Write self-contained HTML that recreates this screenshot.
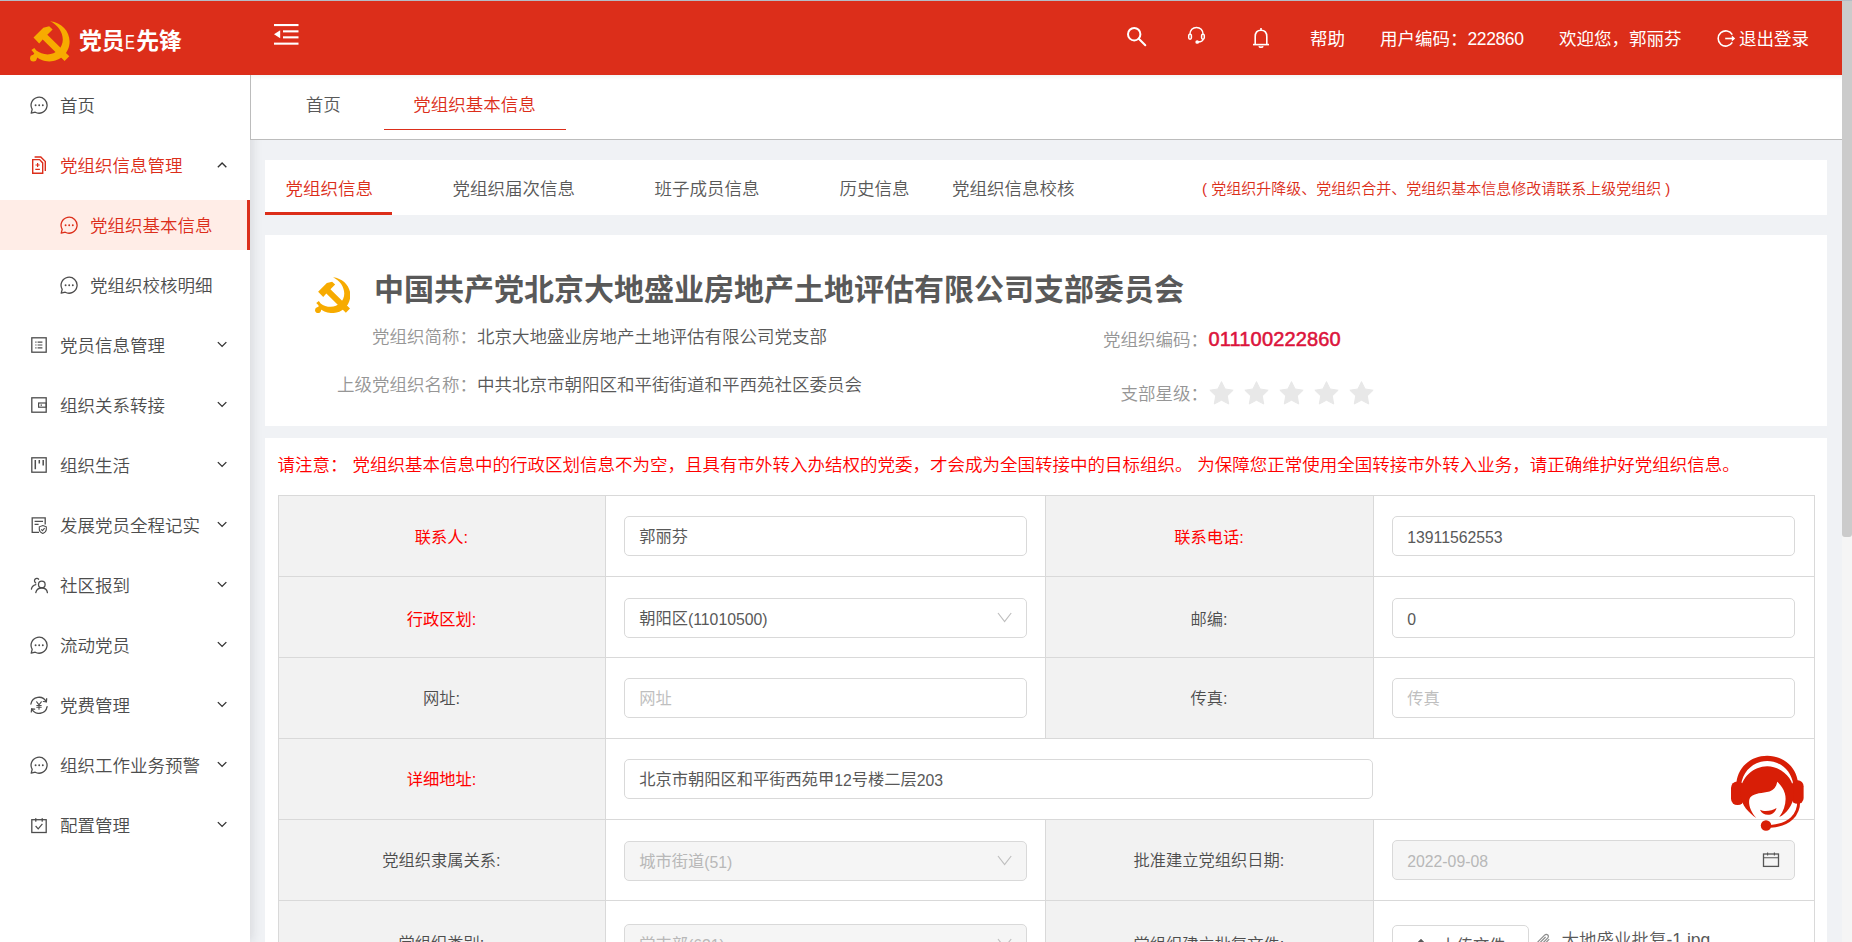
<!DOCTYPE html>
<html lang="zh-CN">
<head>
<meta charset="utf-8">
<title>党员E先锋</title>
<style>
*{box-sizing:border-box;margin:0;padding:0}
html,body{width:1852px;height:942px;overflow:hidden}
body{position:relative;background:#f0f2f5;font-family:"Liberation Sans","Noto Sans CJK SC",sans-serif;font-size:17.5px;color:#595959;font-weight:350}
.abs{position:absolute}
#topline{left:0;top:0;width:1852px;height:1px;background:#b4bcc6;z-index:50}
#header{left:0;top:1px;width:1842px;height:74px;background:#dc2e1a;color:#fff;z-index:10}
#sidebar{left:0;top:75px;width:250px;height:867px;background:#fff;z-index:5;box-shadow:2px 0 10px rgba(29,35,41,.12)}
#tabbar{left:250px;top:75px;width:1592px;height:65px;background:#fff;border-bottom:1px solid #bcbcbc;border-left:1px solid #bcbcbc;z-index:6;overflow:hidden}
#tabbar:before{content:"";position:absolute;left:0;top:0;width:100%;height:5px;background:linear-gradient(#f3f5f5,#fff)}
#scroll{left:1842px;top:1px;width:10px;height:941px;background:#f5f5f5;z-index:40}
#scroll .thumb{left:0;top:0;width:10px;height:536px;background:#cbcbcb;border-radius:0 0 3px 3px}
.logo-text{left:79px;top:22.4px;font-size:22.85px;font-weight:700;letter-spacing:0;line-height:36px;white-space:nowrap}
.hitem{top:18px;line-height:40px;font-size:17.5px;white-space:nowrap;color:#fff;font-weight:400}
.mi{left:0;width:250px;height:50px;line-height:50px;white-space:nowrap;color:#4d4d4d}
.mi .t{position:absolute;left:60px;top:1px}
.mi.sub .t{left:90px}
.mi svg.ic{position:absolute;left:30px;top:16px;width:18px;height:18px}
.mi.sub svg.ic{left:60px}
.mi svg.ar{position:absolute;left:217px;top:19.6px;width:10.2px;height:8.5px}
.mi.red{color:#dc2e1a}
.mi.sel{background:#ffede7;border-right:3px solid #dc2e1a;color:#dc2e1a}
.panel{background:#fff}

.tab1{top:0;height:65px;line-height:60px;white-space:nowrap;color:#595959}
.tab1.on{color:#dc2e1a}
#p1{left:265px;top:160px;width:1562px;height:55px}
#p2{left:265px;top:235px;width:1562px;height:191px}
#p3{left:265px;top:438px;width:1562px;height:504px}
.t2{top:0;line-height:58px;white-space:nowrap;color:#595959}
.lbl{color:#969696;white-space:nowrap;line-height:30px}
.val{color:#595959;white-space:nowrap;line-height:30px}

#tbl{left:278px;top:495px;width:1537px;height:447px;overflow:hidden}
#tbl .bg{background:#f2f2f2}
#tbl .ln{background:#d9d9d9}
.fl{font-size:16.25px;color:#4d4d4d;text-align:center;white-space:nowrap;line-height:30px;font-weight:350}
.fl.r{color:#ff0000;font-weight:400}
.fi{height:40px;border:1px solid #d9d9d9;border-radius:5px;background:#fff;line-height:39px;padding-left:14.2px;font-size:16.25px;color:#595959;white-space:nowrap;overflow:hidden;font-weight:400}
.fi.ph{color:#bfbfbf}
.fi.dis{background:#f5f5f5;color:#b8b8b8}
.n{font-size:15.8px;letter-spacing:0;position:relative;top:.6px}
</style>
</head>
<body>
<div id="topline" class="abs"></div>

<!-- HEADER -->
<div id="header" class="abs">
  <svg class="abs" style="left:30px;top:20px" width="40" height="41" viewBox="0 0 40 41"><g fill="#f7ab00">
<path d="M20.2 0.2 C31.5 1.5 39.6 10 39.6 20.5 C39.6 31.5 30.6 40.4 19.4 40.4 C13.4 40.4 8.4 38.2 5.2 34.6 L3.6 31.4 L1.4 29 L4.3 27 L6.3 29.6 C9.4 32 13.4 33.4 17.6 33.4 C26 33.4 32.8 27 32.8 18.6 C32.8 10.8 27.8 4 20.2 0.2 Z"/>
<circle cx="3.4" cy="37.2" r="3.3"/>
<path d="M1.6 35 L5.2 32 L8.2 35.4 L5.4 39 Z"/>
<path d="M3.5 16.6 L13.3 6.8 L19.2 5.2 L22.6 8.5 L17.3 13.8 L39.3 35.3 L34.6 40 L12.7 18.6 L9.2 22.4 Z"/>
</g></svg>
  <div class="abs logo-text">党员<span style="font-weight:400;font-size:21px;display:inline-block;width:11px;transform:scaleX(.7);margin-left:.5px;transform-origin:0 50%">E</span>先锋</div>
  <svg class="abs" style="left:274px;top:23px" width="25" height="22" viewBox="0 0 25 22"><g fill="#fff"><rect x="0" y="0" width="24.5" height="2.1"/><rect x="9" y="6.3" width="15.5" height="2.1"/><rect x="9" y="12.3" width="15.5" height="2.1"/><rect x="0" y="18.6" width="24.5" height="2.1"/><path d="M0 10.3 L6.2 6.3 L6.2 14.3 Z"/></g></svg>
  <svg class="abs" style="left:1126.3px;top:25.2px" width="21" height="21" viewBox="0 0 21 21"><g fill="none" stroke="#fff" stroke-width="2"><circle cx="8.2" cy="8.2" r="6.2"/><path d="M12.8 12.8 L19.3 19.3" stroke-linecap="round"/></g></svg>
  <svg class="abs" style="left:1186px;top:25.3px" width="20" height="18" viewBox="0 0 20 18"><g fill="none" stroke="#fff" stroke-width="1.5"><path d="M3.9 8.6 C3.9 4.2 6.8 1.4 10.5 1.4 C14.2 1.4 17.1 4.2 17.1 8.6"/><rect x="2.7" y="8.2" width="2.7" height="5" rx="1.35"/><rect x="15.6" y="8.2" width="2.7" height="5" rx="1.35"/><path d="M17.2 13.2 C16.8 15 14.8 16 12 16"/><circle cx="11.2" cy="16" r="1.1" fill="#fff"/></g></svg>
  <svg class="abs" style="left:1252px;top:26px" width="18" height="22" viewBox="0 0 18 22"><g fill="none" stroke="#fff" stroke-width="1.6"><path d="M1 17.6 L17 17.6"/><path d="M3.2 17.6 L3.2 9.6 C3.2 5.6 5.6 3.2 9 3.2 C12.4 3.2 14.8 5.6 14.8 9.6 L14.8 17.6"/><path d="M9 3.2 L9 1"/><path d="M7 19.2 C7.4 20.6 10.6 20.6 11 19.2"/></g></svg>
  <div class="abs hitem" style="left:1310px">帮助</div>
  <div class="abs hitem" style="left:1380px">用户编码：<span style="letter-spacing:-0.4px">222860</span></div>
  <div class="abs hitem" style="left:1559px">欢迎您，郭丽芬</div>
  <svg class="abs" style="left:1716px;top:28px" width="20" height="19" viewBox="0 0 20 19"><g fill="none" stroke="#fff" stroke-width="1.6"><path d="M16.3 5.6 A7.6 7.6 0 1 0 16.3 13.4"/><path d="M9.2 9.5 L18 9.5"/><path d="M15.8 6.4 L19.2 9.5 L15.8 12.6 Z" fill="#fff" stroke="none"/></g></svg>
  <div class="abs hitem" style="left:1739px">退出登录</div>
</div>

<!-- SIDEBAR -->
<div id="sidebar" class="abs">
  <div class="abs mi " style="top:5px"><svg class="ic" viewBox="0 0 18 18"><g fill="none" stroke="#4d4d4d" stroke-width="1.3" stroke-linejoin="round"><path d="M1.2 17.1 L2.2 13.3 A8 8 0 1 1 5.2 16.2 Z"/></g><g fill="#4d4d4d"><circle cx="5.6" cy="9.3" r="0.95"/><circle cx="9.2" cy="9.3" r="0.95"/><circle cx="12.8" cy="9.3" r="0.95"/></g></svg><span class="t">首页</span></div>
  <div class="abs mi red" style="top:65px"><svg class="ic" viewBox="0 0 18 18" style="left:31px"><g fill="none" stroke="#dc2e1a" stroke-width="1.4" stroke-linejoin="miter"><path d="M1.7 3.6 H8.6 L11.7 6.9 V17.2 H1.7 Z"/><path d="M3.6 1 H9.8 L14.3 5.6 V15" /><path d="M6.6 7 V11 M4.5 9 H8.7 M4.3 13.4 H8.9" stroke-width="1.2"/></g></svg><span class="t">党组织信息管理</span><svg class="ar" viewBox="0 0 12 10"><path d="M1 8.6 L6 3.6 L11 8.6" fill="none" stroke="#333" stroke-width="1.6"/></svg></div>
  <div class="abs mi sub sel" style="top:125px"><svg class="ic" viewBox="0 0 18 18"><g fill="none" stroke="#dc2e1a" stroke-width="1.3" stroke-linejoin="round"><path d="M1.2 17.1 L2.2 13.3 A8 8 0 1 1 5.2 16.2 Z"/></g><g fill="#dc2e1a"><circle cx="5.6" cy="9.3" r="0.95"/><circle cx="9.2" cy="9.3" r="0.95"/><circle cx="12.8" cy="9.3" r="0.95"/></g></svg><span class="t">党组织基本信息</span></div>
  <div class="abs mi sub" style="top:185px"><svg class="ic" viewBox="0 0 18 18"><g fill="none" stroke="#4d4d4d" stroke-width="1.3" stroke-linejoin="round"><path d="M1.2 17.1 L2.2 13.3 A8 8 0 1 1 5.2 16.2 Z"/></g><g fill="#4d4d4d"><circle cx="5.6" cy="9.3" r="0.95"/><circle cx="9.2" cy="9.3" r="0.95"/><circle cx="12.8" cy="9.3" r="0.95"/></g></svg><span class="t">党组织校核明细</span></div>
  <div class="abs mi " style="top:245px"><svg class="ic" viewBox="0 0 18 18"><g fill="none" stroke="#4d4d4d" stroke-width="1.3"><rect x="1.8" y="1.8" width="14.4" height="14.4"/><path d="M7.6 6.1 H12.4 M7.6 9 H12.4 M7.6 11.9 H12.4" stroke-width="1.2"/><path d="M5.3 6.1 H6.5 M5.3 9 H6.5 M5.3 11.9 H6.5" stroke-width="1.2"/></g></svg><span class="t">党员信息管理</span><svg class="ar" viewBox="0 0 12 10"><path d="M1 2.5 L6 7.5 L11 2.5" fill="none" stroke="#333" stroke-width="1.6"/></svg></div>
  <div class="abs mi " style="top:305px"><svg class="ic" viewBox="0 0 18 18"><g fill="none" stroke="#4d4d4d" stroke-width="1.3"><rect x="1.8" y="1.8" width="14.4" height="14.4"/><rect x="8.6" y="7" width="7.6" height="4.2" stroke-width="1.2"/><path d="M10.6 9.1 H12" stroke-width="1.4"/></g></svg><span class="t">组织关系转接</span><svg class="ar" viewBox="0 0 12 10"><path d="M1 2.5 L6 7.5 L11 2.5" fill="none" stroke="#333" stroke-width="1.6"/></svg></div>
  <div class="abs mi " style="top:365px"><svg class="ic" viewBox="0 0 18 18"><g fill="none" stroke="#4d4d4d" stroke-width="1.3"><rect x="1.8" y="1.8" width="14.4" height="14.4"/><path d="M5.3 4 V13.2 M9.3 4 V7.6 M13.2 4 V9.6" stroke-width="1.5"/></g></svg><span class="t">组织生活</span><svg class="ar" viewBox="0 0 12 10"><path d="M1 2.5 L6 7.5 L11 2.5" fill="none" stroke="#333" stroke-width="1.6"/></svg></div>
  <div class="abs mi " style="top:425px"><svg class="ic" viewBox="0 0 18 18"><g fill="none" stroke="#4d4d4d" stroke-width="1.3"><path d="M9 16.4 H2.2 V1.8 H15.2 V8.4"/><path d="M4.6 5.4 H13 M4.6 8.4 H8.6" stroke-width="1.2"/><path d="M12.8 9.6 L16.3 10.8 V13.6 C16.3 15.4 14.6 16.8 12.8 17.5 C11 16.8 9.3 15.4 9.3 13.6 V10.8 Z" stroke-width="1.1"/><path d="M11.2 13.4 L12.5 14.7 L14.6 12.2" stroke-width="1.1"/></g></svg><span class="t">发展党员全程记实</span><svg class="ar" viewBox="0 0 12 10"><path d="M1 2.5 L6 7.5 L11 2.5" fill="none" stroke="#333" stroke-width="1.6"/></svg></div>
  <div class="abs mi " style="top:485px"><svg class="ic" viewBox="0 0 18 18"><g fill="none" stroke="#4d4d4d" stroke-width="1.3" stroke-linecap="round"><circle cx="11.8" cy="8.4" r="3.3"/><path d="M5.8 16.6 C6.4 13.6 8.8 12 11.8 12 C14.8 12 17 13.6 17.4 16.6"/><path d="M8.6 3.2 C7.8 2.2 6.2 2 5.2 3 C4 4.2 4.4 6.2 5.8 7"/><path d="M1.4 13.2 C1.8 10.8 3.4 9.2 5.8 8.6"/></g></svg><span class="t">社区报到</span><svg class="ar" viewBox="0 0 12 10"><path d="M1 2.5 L6 7.5 L11 2.5" fill="none" stroke="#333" stroke-width="1.6"/></svg></div>
  <div class="abs mi " style="top:545px"><svg class="ic" viewBox="0 0 18 18"><g fill="none" stroke="#4d4d4d" stroke-width="1.3" stroke-linejoin="round"><path d="M1.2 17.1 L2.2 13.3 A8 8 0 1 1 5.2 16.2 Z"/></g><g fill="#4d4d4d"><circle cx="5.6" cy="9.3" r="0.95"/><circle cx="9.2" cy="9.3" r="0.95"/><circle cx="12.8" cy="9.3" r="0.95"/></g></svg><span class="t">流动党员</span><svg class="ar" viewBox="0 0 12 10"><path d="M1 2.5 L6 7.5 L11 2.5" fill="none" stroke="#333" stroke-width="1.6"/></svg></div>
  <div class="abs mi " style="top:605px"><svg class="ic" viewBox="0 0 18 18"><g fill="none" stroke="#4d4d4d" stroke-width="1.3" stroke-linecap="round"><path d="M0.9 8 A8.2 8.2 0 0 1 16.2 5.6"/><path d="M17.1 10.6 A8.2 8.2 0 0 1 1.8 13"/><path d="M16.7 2.6 L16.4 5.8 L13.3 5.5" stroke-width="1.2"/><path d="M1.3 16 L1.6 12.8 L4.7 13.1" stroke-width="1.2"/><path d="M6.7 5.8 L9 8.9 L11.3 5.8 M9 8.9 V13.2 M6.8 9.5 H11.2 M6.8 11.3 H11.2" stroke-width="1.1"/></g></svg><span class="t">党费管理</span><svg class="ar" viewBox="0 0 12 10"><path d="M1 2.5 L6 7.5 L11 2.5" fill="none" stroke="#333" stroke-width="1.6"/></svg></div>
  <div class="abs mi " style="top:665px"><svg class="ic" viewBox="0 0 18 18"><g fill="none" stroke="#4d4d4d" stroke-width="1.3" stroke-linejoin="round"><path d="M1.2 17.1 L2.2 13.3 A8 8 0 1 1 5.2 16.2 Z"/></g><g fill="#4d4d4d"><circle cx="5.6" cy="9.3" r="0.95"/><circle cx="9.2" cy="9.3" r="0.95"/><circle cx="12.8" cy="9.3" r="0.95"/></g></svg><span class="t">组织工作业务预警</span><svg class="ar" viewBox="0 0 12 10"><path d="M1 2.5 L6 7.5 L11 2.5" fill="none" stroke="#333" stroke-width="1.6"/></svg></div>
  <div class="abs mi " style="top:725px"><svg class="ic" viewBox="0 0 18 18"><g fill="none" stroke="#4d4d4d" stroke-width="1.3"><rect x="1.8" y="3.7" width="14.4" height="12.8"/><path d="M5.8 2.6 V5.2 M12.2 2.6 V5.2" stroke-linecap="round"/><path d="M5.6 10 L8.2 12.8 L12.4 7.8" stroke-width="1.2"/></g></svg><span class="t">配置管理</span><svg class="ar" viewBox="0 0 12 10"><path d="M1 2.5 L6 7.5 L11 2.5" fill="none" stroke="#333" stroke-width="1.6"/></svg></div>
</div>

<!-- TAB BAR -->
<div id="tabbar" class="abs">
  <div class="abs tab1" style="left:54.7px">首页</div>
  <div class="abs tab1 on" style="left:162.3px">党组织基本信息</div>
  <div class="abs" style="left:133px;top:54px;width:182px;height:1px;background:#dc2e1a"></div>
</div>

<!-- CONTENT -->
<div id="content">
<div id="p1" class="abs panel">
  <div class="abs t2" style="left:20.5px;color:#dc2e1a">党组织信息</div>
  <div class="abs" style="left:0;top:52px;width:126.5px;height:3px;background:#dc2e1a"></div>
  <div class="abs t2" style="left:187.5px">党组织届次信息</div>
  <div class="abs t2" style="left:389.5px">班子成员信息</div>
  <div class="abs t2" style="left:574.5px">历史信息</div>
  <div class="abs t2" style="left:687px">党组织信息校核</div>
  <div class="abs t2" style="left:937px;color:#dc2e1a;font-size:15px">( 党组织升降级、党组织合并、党组织基本信息修改请联系上级党组织 )</div>
</div>
<div id="p2" class="abs panel">
  <svg class="abs" style="left:49.7px;top:41.7px" width="35.7" height="36.6" viewBox="0 0 40 41"><g fill="#f7ab00">
<path d="M20.2 0.2 C31.5 1.5 39.6 10 39.6 20.5 C39.6 31.5 30.6 40.4 19.4 40.4 C13.4 40.4 8.4 38.2 5.2 34.6 L3.6 31.4 L1.4 29 L4.3 27 L6.3 29.6 C9.4 32 13.4 33.4 17.6 33.4 C26 33.4 32.8 27 32.8 18.6 C32.8 10.8 27.8 4 20.2 0.2 Z"/>
<circle cx="3.4" cy="37.2" r="3.3"/>
<path d="M1.6 35 L5.2 32 L8.2 35.4 L5.4 39 Z"/>
<path d="M3.5 16.6 L13.3 6.8 L19.2 5.2 L22.6 8.5 L17.3 13.8 L39.3 35.3 L34.6 40 L12.7 18.6 L9.2 22.4 Z"/>
</g></svg>
  <div class="abs" style="left:109px;top:33px;font-size:30px;font-weight:700;color:#595959;line-height:44px;white-space:nowrap">中国共产党北京大地盛业房地产土地评估有限公司支部委员会</div>
  <div class="abs lbl" style="left:107px;top:87px">党组织简称：</div>
  <div class="abs val" style="left:212px;top:87px">北京大地盛业房地产土地评估有限公司党支部</div>
  <div class="abs lbl" style="left:72px;top:135px">上级党组织名称：</div>
  <div class="abs val" style="left:212px;top:135px">中共北京市朝阳区和平街街道和平西苑社区委员会</div>
  <div class="abs lbl" style="left:838px;top:90px">党组织编码：</div>
  <div class="abs" style="left:943.5px;top:89px;font-size:20px;font-weight:400;-webkit-text-stroke:.55px #dc143c;letter-spacing:.15px;color:#dc143c;line-height:30px;white-space:nowrap">011100222860</div>
  <div class="abs lbl" style="left:855.5px;top:144px">支部星级：</div>
  <svg class="abs" style="left:944.0px;top:146px" width="25" height="24" viewBox="0 0 25 24"><path d="M12.5 0.6 L16.1 8 L24.2 9.2 L18.3 14.9 L19.7 23 L12.5 19.2 L5.3 23 L6.7 14.9 L0.8 9.2 L8.9 8 Z" fill="#e8e8e8" stroke="#e8e8e8" stroke-width="1" stroke-linejoin="round"/></svg><svg class="abs" style="left:979.0px;top:146px" width="25" height="24" viewBox="0 0 25 24"><path d="M12.5 0.6 L16.1 8 L24.2 9.2 L18.3 14.9 L19.7 23 L12.5 19.2 L5.3 23 L6.7 14.9 L0.8 9.2 L8.9 8 Z" fill="#e8e8e8" stroke="#e8e8e8" stroke-width="1" stroke-linejoin="round"/></svg><svg class="abs" style="left:1014.0px;top:146px" width="25" height="24" viewBox="0 0 25 24"><path d="M12.5 0.6 L16.1 8 L24.2 9.2 L18.3 14.9 L19.7 23 L12.5 19.2 L5.3 23 L6.7 14.9 L0.8 9.2 L8.9 8 Z" fill="#e8e8e8" stroke="#e8e8e8" stroke-width="1" stroke-linejoin="round"/></svg><svg class="abs" style="left:1049.0px;top:146px" width="25" height="24" viewBox="0 0 25 24"><path d="M12.5 0.6 L16.1 8 L24.2 9.2 L18.3 14.9 L19.7 23 L12.5 19.2 L5.3 23 L6.7 14.9 L0.8 9.2 L8.9 8 Z" fill="#e8e8e8" stroke="#e8e8e8" stroke-width="1" stroke-linejoin="round"/></svg><svg class="abs" style="left:1084.0px;top:146px" width="25" height="24" viewBox="0 0 25 24"><path d="M12.5 0.6 L16.1 8 L24.2 9.2 L18.3 14.9 L19.7 23 L12.5 19.2 L5.3 23 L6.7 14.9 L0.8 9.2 L8.9 8 Z" fill="#e8e8e8" stroke="#e8e8e8" stroke-width="1" stroke-linejoin="round"/></svg>
</div>
<div id="p3" class="abs panel">
  <div class="abs" style="left:12.6px;top:11px;color:#ff0000;line-height:32px;white-space:nowrap">请注意： 党组织基本信息中的行政区划信息不为空，且具有市外转入办结权的党委，才会成为全国转接中的目标组织。 为保障您正常使用全国转接市外转入业务，请正确维护好党组织信息。</div>
</div>
<!--TBL-START-->
<div id="tbl" class="abs">
<div class="abs bg" style="left:0;top:0;width:327px;height:447px"></div>
<div class="abs bg" style="left:767px;top:0;width:328px;height:243px"></div>
<div class="abs bg" style="left:767px;top:324px;width:328px;height:123px"></div>
<div class="abs ln" style="left:0;top:0px;width:1537px;height:1px"></div>
<div class="abs ln" style="left:0;top:81px;width:1537px;height:1px"></div>
<div class="abs ln" style="left:0;top:162px;width:1537px;height:1px"></div>
<div class="abs ln" style="left:0;top:243px;width:1537px;height:1px"></div>
<div class="abs ln" style="left:0;top:324px;width:1537px;height:1px"></div>
<div class="abs ln" style="left:0;top:405px;width:1537px;height:1px"></div>
<div class="abs ln" style="left:0px;top:0;width:1px;height:447px"></div>
<div class="abs ln" style="left:327px;top:0;width:1px;height:447px"></div>
<div class="abs ln" style="left:767px;top:0;width:1px;height:244px"></div>
<div class="abs ln" style="left:767px;top:324px;width:1px;height:123px"></div>
<div class="abs ln" style="left:1095px;top:0;width:1px;height:244px"></div>
<div class="abs ln" style="left:1095px;top:324px;width:1px;height:123px"></div>
<div class="abs ln" style="left:1536px;top:0;width:1px;height:447px"></div>
<div class="abs fl r" style="left:0px;width:327px;top:26.5px">联系人:</div>
<div class="abs fi " style="left:346px;top:21px;width:403px">郭丽芬</div>
<div class="abs fl r" style="left:767px;width:328px;top:26.5px">联系电话:</div>
<div class="abs fi " style="left:1114px;top:21px;width:403px"><span class="n">13911562553</span></div>
<div class="abs fl r" style="left:0px;width:327px;top:108.5px">行政区划:</div>
<div class="abs fi " style="left:346px;top:103px;width:403px">朝阳区<span class="n">(11010500)</span><svg class="abs" style="right:14px;top:13px" width="15" height="12" viewBox="0 0 15 12"><path d="M1 1 L7.6 9.6 L14.2 1" fill="none" stroke="#bfbfbf" stroke-width="1.2"/></svg></div>
<div class="abs fl" style="left:767px;width:328px;top:108.5px">邮编:</div>
<div class="abs fi " style="left:1114px;top:103px;width:403px"><span class="n">0</span></div>
<div class="abs fl" style="left:0px;width:327px;top:188.0px">网址:</div>
<div class="abs fi ph" style="left:346px;top:183px;width:403px">网址</div>
<div class="abs fl" style="left:767px;width:328px;top:188.0px">传真:</div>
<div class="abs fi ph" style="left:1114px;top:183px;width:403px">传真</div>
<div class="abs fl r" style="left:0px;width:327px;top:269.0px">详细地址:</div>
<div class="abs fi " style="left:346px;top:264px;width:749px">北京市朝阳区和平街西苑甲<span class="n">12</span>号楼二层<span class="n">203</span></div>
<div class="abs fl" style="left:0px;width:327px;top:350.0px">党组织隶属关系:</div>
<div class="abs fi dis" style="left:346px;top:346px;width:403px">城市街道<span class="n">(51)</span><svg class="abs" style="right:14px;top:13px" width="15" height="12" viewBox="0 0 15 12"><path d="M1 1 L7.6 9.6 L14.2 1" fill="none" stroke="#bfbfbf" stroke-width="1.2"/></svg></div>
<div class="abs fl" style="left:767px;width:328px;top:350.0px">批准建立党组织日期:</div>
<div class="abs fi dis" style="left:1114px;top:345px;width:403px"><span class="n">2022-09-08</span><svg class="abs" style="right:14px;top:10px" width="18" height="18" viewBox="0 0 18 18"><g fill="none" stroke="#555" stroke-width="1.3"><rect x="1.5" y="3" width="15" height="12.4"/><path d="M1.5 6.8 H16.5" stroke-width="1.1"/><path d="M5.6 1.4 V4.6 M12.4 1.4 V4.6" stroke-width="1.1"/></g></svg></div>
<div class="abs fl" style="left:0px;width:327px;top:432.5px">党组织类别:</div>
<div class="abs fi dis" style="left:346px;top:429px;width:403px">党支部<span class="n">(631)</span><svg class="abs" style="right:14px;top:13px" width="15" height="12" viewBox="0 0 15 12"><path d="M1 1 L7.6 9.6 L14.2 1" fill="none" stroke="#bfbfbf" stroke-width="1.2"/></svg></div>
<div class="abs fl" style="left:767px;width:328px;top:433.5px">党组织建立批复文件:</div>
<div class="abs fi" style="left:1114px;top:430px;width:137px;padding-left:47.5px;color:#595959">上传文件<svg class="abs" style="left:20px;top:12px" width="16" height="16" viewBox="0 0 16 16"><g fill="none" stroke="#595959" stroke-width="1.4"><path d="M8 2 V12 M3.6 6.2 L8 1.8 L12.4 6.2 M1.5 14.6 H14.5"/></g></svg></div>
<svg class="abs" style="left:1258px;top:438px" width="15" height="16" viewBox="0 0 15 16"><path d="M13.2 6.2 L7 12.6 C5.6 14 3.6 14 2.4 12.8 C1.2 11.6 1.2 9.6 2.6 8.2 L8.6 2.2 C9.6 1.2 11 1.2 11.8 2 C12.6 2.8 12.6 4.2 11.6 5.2 L5.8 11 C5.4 11.4 4.6 11.4 4.2 11 C3.8 10.6 3.8 9.8 4.2 9.4 L9.6 4" fill="none" stroke="#8c8c8c" stroke-width="1.2"/></svg>
<div class="abs" style="left:1283.5px;top:430px;line-height:30px;font-size:17.5px;color:#595959;white-space:nowrap">大地盛业批复-1.jpg</div>
</div>
<!--TBL-END-->
<svg class="abs" style="left:1710px;top:740px;z-index:30" width="120" height="110" viewBox="0 0 1028 942"><g fill="#d81e06">
<path d="M226 368 C238 232 350 135 490 135 C630 135 742 232 754 368 L714 384 C698 262 602 180 490 180 C378 180 282 262 266 384 Z"/>
<rect x="180" y="355" width="112" height="202" rx="54"/>
<rect x="698" y="345" width="104" height="202" rx="50"/>
<path d="M397 668 C330 620 270 560 262 470 C250 330 370 225 490 225 C610 225 730 330 718 470 C712 560 652 630 593 660 C640 600 658 520 642 460 C628 412 602 382 575 358 C570 400 546 430 510 440 C450 455 382 450 346 490 C322 522 336 602 397 668 Z"/>
<path d="M428 598 C462 616 530 610 570 583 C560 625 522 642 496 641 C466 640 440 626 428 598 Z"/>
<path d="M760 520 C762 640 684 728 520 740" fill="none" stroke="#d81e06" stroke-width="25"/>
<circle cx="480" cy="733" r="45"/>
</g></svg>

</div>

<!-- SCROLLBAR -->
<div id="scroll" class="abs"><div class="thumb abs"></div></div>
</body>
</html>
